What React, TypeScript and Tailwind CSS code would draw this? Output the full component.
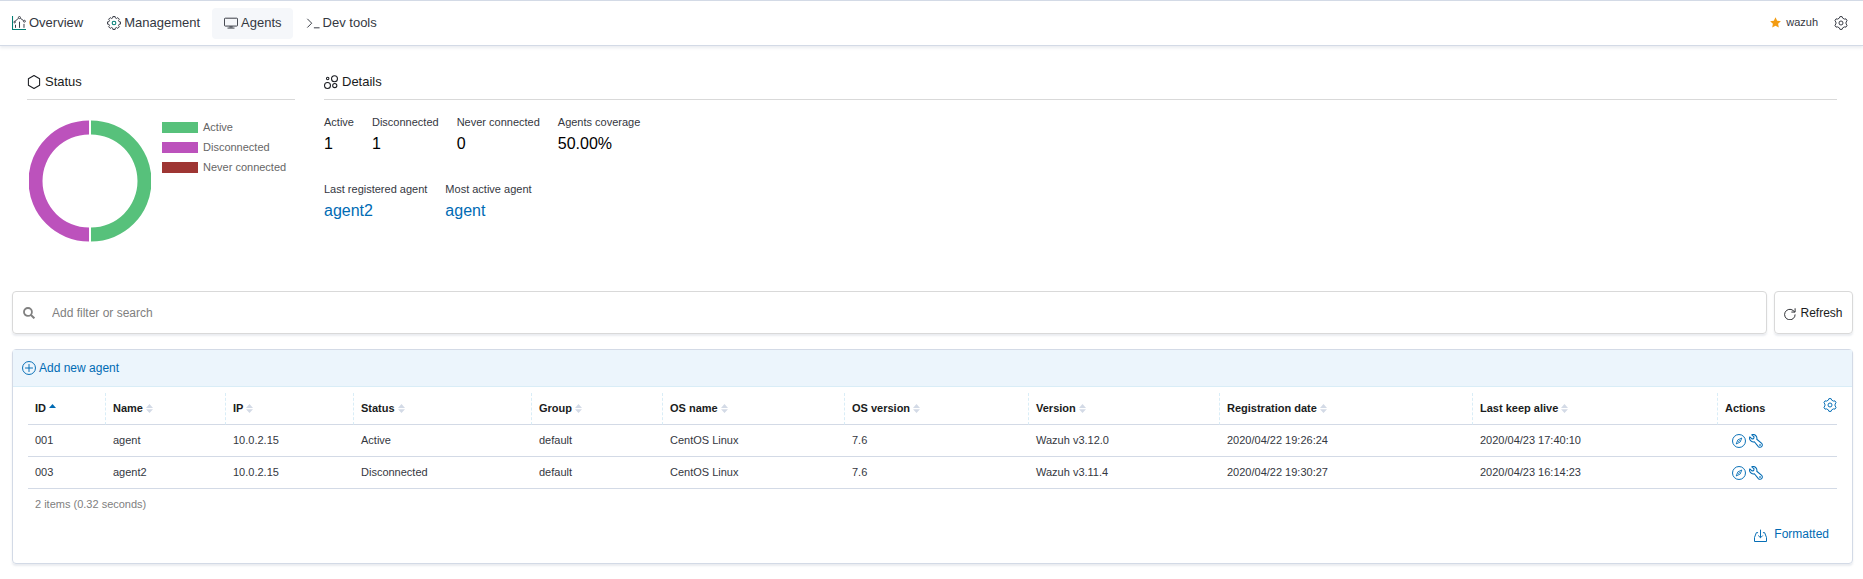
import React from "react";

type IconProps = { className?: string };

function gearPath(teeth: number, outer: number, inner: number, tip: number, root: number) {
  const step = (Math.PI * 2) / teeth;
  const at = (r: number, a: number) =>
    `${(8 + r * Math.sin(a)).toFixed(2)} ${(8 - r * Math.cos(a)).toFixed(2)}`;
  const points: string[] = [];
  for (let i = 0; i < teeth; i++) {
    const a = i * step;
    points.push(at(outer, a - step * tip), at(outer, a + step * tip));
    points.push(at(inner, a + step * root), at(inner, a + step * (1 - root)));
  }
  return `M${points.join("L")}Z`;
}

const wideGear = gearPath(6, 7.4, 5.9, 0.16, 0.32);
const fineGear = gearPath(8, 7.5, 6, 0.22, 0.32);

function Svg({ className, children }: IconProps & { children: React.ReactNode }) {
  return (
    <svg
      viewBox="0 0 16 16"
      fill="none"
      stroke="currentColor"
      strokeLinejoin="round"
      aria-hidden="true"
      className={`shrink-0 ${className ?? "size-3.5"}`}
    >
      {children}
    </svg>
  );
}

const OverviewIcon = () => (
  <Svg>
    <path d="M.6 0v15.4H16" className="stroke-[#017d73]" strokeWidth="1.2" />
    <path d="M4 13.5V10M8.600 13.500V6.500M13.700 13.500V9" strokeWidth="1.1" />
    <path d="M3.200 6.300l4.200-3.700M9.500 2.600l3.700 2.700" strokeWidth="1.1" />
    <circle cx="8.5" cy="1.8" r="1.2" />
    <circle cx="14.2" cy="6" r="1.1" />
    <circle cx="3" cy="7" r=".9" />
  </Svg>
);

const ManagementIcon = () => (
  <Svg>
    <path d={fineGear} strokeWidth="1.1" />
    <circle cx="8" cy="8" r="2.1" className="stroke-[#017d73]" strokeWidth="1.2" />
  </Svg>
);

const MonitorIcon = () => (
  <Svg>
    <path d="M1.5 2.5h13a1 1 0 0 1 1 1v7a1 1 0 0 1-1 1h-13a1 1 0 0 1-1-1v-7a1 1 0 0 1 1-1zM7 11.5v2M9 11.5v2M4 13.8h8" strokeWidth="1.1" />
  </Svg>
);

const ConsoleIcon = () => (
  <Svg>
    <path d="M1.5 3.2l5 5-5 5M9 13.5h6.5" strokeWidth="1.1" />
  </Svg>
);

const GearIcon = () => (
  <Svg>
    <path d={wideGear} strokeWidth="1.1" />
    <circle cx="8" cy="8" r="2.3" strokeWidth="1.1" />
  </Svg>
);

const HexagonIcon = () => (
  <Svg>
    <path d="M8 .6l6.4 3.7v7.4L8 15.4l-6.4-3.7V4.3z" strokeWidth="1.2" />
  </Svg>
);

const BubblesIcon = () => (
  <Svg>
    <circle cx="4.2" cy="4" r="1.4" strokeWidth="1.2" />
    <circle cx="12" cy="4.2" r="3.4" strokeWidth="1.2" />
    <circle cx="4" cy="12" r="3.4" strokeWidth="1.2" />
    <circle cx="12.3" cy="12" r="2.4" strokeWidth="1.2" />
  </Svg>
);

const SearchIcon = () => (
  <Svg className="size-3">
    <circle cx="6.6" cy="6.6" r="5.3" strokeWidth="2.4" />
    <path d="M10.5 10.5l4.6 4.6" strokeWidth="2.8" />
  </Svg>
);

const RefreshIcon = () => (
  <Svg className="mt-0.5 size-3">
    <path d="M14.8 8.6a7 7 0 1 1-2.6-5.3l2 1.9M14.8.4v5h-5" strokeWidth="1.2" />
  </Svg>
);

const PlusCircleIcon = () => (
  <Svg>
    <circle cx="8" cy="8" r="7.4" strokeWidth="1.1" />
    <path d="M8 3.5v9M3.5 8h9" strokeWidth="1.1" />
  </Svg>
);

const CompassIcon = () => (
  <Svg>
    <circle cx="8" cy="8" r="7.4" strokeWidth="1.1" />
    <path d="M11.2 4.6L9.3 9.2l-4.5 2.2 1.9-4.7zM7.2 8.8l1.6-1.6" />
  </Svg>
);

const WrenchIcon = () => (
  <Svg>
    <path
      d="M3.2.9A4.3 4.3 0 0 1 8.9 6l5.6 4.7a2.6 2.6 0 1 1-3.8 3.7L6.1 8.9A4.3 4.3 0 0 1 .9 3.3l2.5 2.4 1.9-.4.5-1.9z"
      strokeWidth="1.2"
    />
    <circle cx="12.6" cy="12.6" r=".6" />
  </Svg>
);

const ExportIcon = () => (
  <Svg className="mt-0.5 size-[13px]">
    <path d="M5 4.500H2.900L.6 10.500v4.900h14.800v-4.900L13.100 4.500H11M8 .8v9.800M5.200 8L8 10.800 10.800 8" strokeWidth="1.2" />
  </Svg>
);

const StarIcon = () => (
  <svg viewBox="0 0 16 16" aria-hidden="true" className="size-[11px] fill-[#f39c12]">
    <path d="M8 .3l2.4 5 5.4.7-4 3.8 1 5.5L8 12.7l-4.8 2.6 1-5.5L.2 6l5.4-.7z" />
  </svg>
);

const SortIcon = ({ active }: { active?: boolean }) => (
  <svg
    viewBox="0 0 7 9"
    aria-hidden="true"
    className={`h-[9px] w-[7px] ${active ? "fill-[#006bb4]" : "fill-[#d3dae6]"}`}
  >
    <path d={active ? "M0 4L3.5 0 7 4z" : "M0 4L3.5 0 7 4zM0 5.2h7L3.5 9z"} />
  </svg>
);

const tabs = [
  { label: "Overview", icon: <OverviewIcon /> },
  { label: "Management", icon: <ManagementIcon /> },
  { label: "Agents", icon: <MonitorIcon />, active: true },
  { label: "Dev tools", icon: <ConsoleIcon /> },
];

const legend = [
  { label: "Active", swatch: "bg-[#57c17b]" },
  { label: "Disconnected", swatch: "bg-[#bc52bc]" },
  { label: "Never connected", swatch: "bg-[#9e3533]" },
];

const stats = [
  { label: "Active", value: "1" },
  { label: "Disconnected", value: "1" },
  { label: "Never connected", value: "0" },
  { label: "Agents coverage", value: "50.00%" },
];

const links = [
  { label: "Last registered agent", value: "agent2" },
  { label: "Most active agent", value: "agent" },
];

const columns = [
  { label: "ID", width: "w-[77px]" },
  { label: "Name", width: "w-[120px]" },
  { label: "IP", width: "w-[128px]" },
  { label: "Status", width: "w-[178px]" },
  { label: "Group", width: "w-[131px]" },
  { label: "OS name", width: "w-[182px]" },
  { label: "OS version", width: "w-[184px]" },
  { label: "Version", width: "w-[191px]" },
  { label: "Registration date", width: "w-[253px]" },
  { label: "Last keep alive", width: "w-[245px]" },
];

const agents = [
  ["001", "agent", "10.0.2.15", "Active", "default", "CentOS Linux", "7.6", "Wazuh v3.12.0", "2020/04/22 19:26:24", "2020/04/23 17:40:10"],
  ["003", "agent2", "10.0.2.15", "Disconnected", "default", "CentOS Linux", "7.6", "Wazuh v3.11.4", "2020/04/22 19:30:27", "2020/04/23 16:14:23"],
];

function SectionTitle({ icon, children }: { icon: React.ReactNode; children: React.ReactNode }) {
  return (
    <h2 className="flex h-[34px] items-center gap-1 border-b border-[#d9d9d9] pb-0.5 text-[13px] text-[#1a1c21]">
      {icon}
      {children}
    </h2>
  );
}

function Donut() {
  return (
    <svg viewBox="0 0 122 122" className="mt-[3px] size-[122px] shrink-0" role="img" aria-label="Agents by status">
      <path d="M62 .5A60.5 60.5 0 0 1 62 121.5V107.5A46.5 46.5 0 0 0 62 14.5z" fill="#57c17b" />
      <path d="M60 .5A60.5 60.5 0 0 0 60 121.5V107.5A46.5 46.5 0 0 1 60 14.5z" fill="#bc52bc" />
    </svg>
  );
}

export default function App() {
  return (
    <div className="min-h-screen bg-white font-['Liberation_Sans',Arial,sans-serif] text-[#343741]">
      <header className="flex h-[46px] items-center justify-between border-y border-[#d3dae6] pr-[15px] shadow-[0_2px_3px_rgba(152,162,179,0.2)]">
        <nav className="flex gap-px">
          {tabs.map((tab) => (
            <a
              key={tab.label}
              href="#"
              aria-current={tab.active ? "page" : undefined}
              className={`flex h-[31px] items-center gap-[3px] rounded pr-[11px] pl-3 text-[13px] ${tab.active ? "bg-[#f5f7fa]" : ""}`}
            >
              {tab.icon}
              {tab.label}
            </a>
          ))}
        </nav>
        <div className="flex items-center">
          <span className="mr-4 flex items-center gap-[5px] pb-0.5 text-[11px]">
            <StarIcon />
            wazuh
          </span>
          <button type="button" aria-label="Settings">
            <GearIcon />
          </button>
        </div>
      </header>

      <main className="pt-5 pr-2.5 pl-3">
        <div className="flex min-h-[225px] gap-[29px] pr-4 pl-[15px]">
          <section className="w-[268px] shrink-0">
            <SectionTitle icon={<HexagonIcon />}>Status</SectionTitle>
            <div className="flex gap-[11px] pt-[17px] pl-0.5">
              <Donut />
              <ul className="text-[11px] leading-5 text-[#666]">
                {legend.map((item) => (
                  <li key={item.label} className="flex items-center gap-[5px] whitespace-nowrap">
                    <span className={`h-[11px] w-9 ${item.swatch}`} />
                    {item.label}
                  </li>
                ))}
              </ul>
            </div>
          </section>

          <section className="grow">
            <SectionTitle icon={<BubblesIcon />}>Details</SectionTitle>
            <dl className="flex gap-[18px] pt-[14px]">
              {stats.map((stat) => (
                <div key={stat.label}>
                  <dt className="text-[11px] leading-4">{stat.label}</dt>
                  <dd className="pt-0.5 text-base text-black">{stat.value}</dd>
                </div>
              ))}
            </dl>
            <dl className="flex gap-[18px] pt-[25px]">
              {links.map((item) => (
                <div key={item.label}>
                  <dt className="text-[11px] leading-4">{item.label}</dt>
                  <dd className="pt-0.5 text-base text-[#006bb4]">
                    <a href="#">{item.value}</a>
                  </dd>
                </div>
              ))}
            </dl>
          </section>
        </div>

        <form className="flex gap-[7px] text-xs">
          <label className="flex h-[43px] grow items-center gap-[17px] rounded-sm border border-[#d9d9d9] pl-2.5 text-[#808080] shadow-[0_2px_2px_rgba(152,162,179,0.2)]">
            <SearchIcon />
            <input
              type="text"
              aria-label="Add filter or search"
              placeholder="Add filter or search"
              className="h-full grow bg-transparent outline-none placeholder:text-[#808080]"
            />
          </label>
          <button
            type="button"
            className="flex h-[43px] w-[79px] items-center justify-center gap-1 rounded-sm border border-[#d9d9d9] text-[#1a1c21] shadow-[0_2px_2px_rgba(152,162,179,0.2)]"
          >
            <RefreshIcon />
            Refresh
          </button>
        </form>

        <section className="mt-[15px] rounded-sm border border-[#d3dae6] text-[11px] shadow-[0_2px_2px_rgba(152,162,179,0.2)]">
          <div className="flex h-[37px] items-center border-b border-[#d9edf7] bg-[#ecf5fc] px-[9px]">
            <a href="#" className="flex items-center gap-[3px] text-xs text-[#006bb4]">
              <PlusCircleIcon />
              Add new agent
            </a>
          </div>

          <div className="px-[15px] pt-1.5">
            <table className="w-full table-fixed border-separate border-spacing-0 text-left">
              <colgroup>
                {columns.map((column) => (
                  <col key={column.label} className={column.width} />
                ))}
                <col className="w-[120px]" />
              </colgroup>
              <thead>
                <tr className="h-8 text-[#1a1c21]">
                  {columns.map((column, i) => (
                    <th
                      key={column.label}
                      className={`border-b border-b-[#d3dae6] pr-0 pl-[7px] ${i ? "border-l border-dashed border-l-[#d9edf7] [border-bottom-style:solid]" : ""}`}
                    >
                      <button type="button" className="flex items-center gap-[3px] whitespace-nowrap font-bold">
                        {column.label}
                        <SortIcon active={i === 0} />
                      </button>
                    </th>
                  ))}
                  <th className="border-b border-l border-dashed border-b-[#d3dae6] border-l-[#d9edf7] pl-[7px] [border-bottom-style:solid]">
                    <div className="flex items-center justify-between">
                      Actions
                      <button type="button" aria-label="Choose columns" className="-mt-2 text-[#006bb4]">
                        <GearIcon />
                      </button>
                    </div>
                  </th>
                </tr>
              </thead>
              <tbody>
                {agents.map((row) => (
                  <tr key={row[0]} className="h-8">
                    {row.map((cell, i) => (
                      <td key={i} className={`border-b border-[#d3dae6] ${i ? "pl-2" : "pl-[7px]"}`}>
                        {cell}
                      </td>
                    ))}
                    <td className="border-b border-[#d3dae6] pl-[15px]">
                      <div className="flex gap-[3px] text-[#006bb4]">
                        <button type="button" aria-label={`Discover ${row[1]}`}>
                          <CompassIcon />
                        </button>
                        <button type="button" aria-label={`Configure ${row[1]}`}>
                          <WrenchIcon />
                        </button>
                      </div>
                    </td>
                  </tr>
                ))}
              </tbody>
            </table>
            <p className="flex h-[31px] items-center pl-[7px] text-[#808080]">2 items (0.32 seconds)</p>
          </div>

          <div className="flex justify-end pt-1.5 pr-[23px] pb-[21px]">
            <a href="#" className="flex items-center gap-[7px] text-xs text-[#006bb4]">
              <ExportIcon />
              Formatted
            </a>
          </div>
        </section>
      </main>
    </div>
  );
}
